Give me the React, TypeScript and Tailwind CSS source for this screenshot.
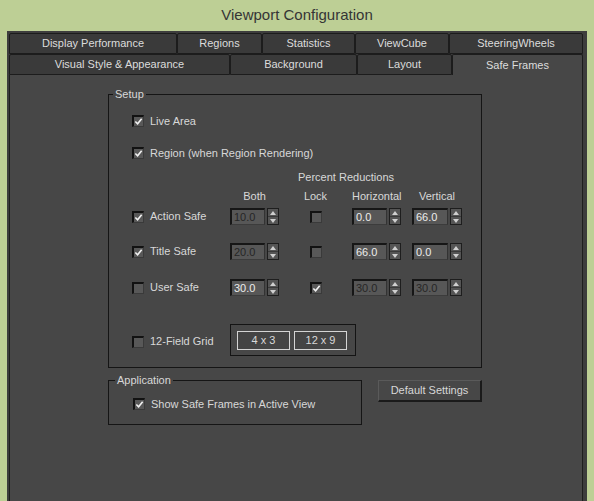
import React from "react";

const font = "font-['Liberation_Sans',Arial,sans-serif]";

function Check({ checked }: { checked?: boolean }) {
  return (
    <span className="relative inline-flex w-[12px] h-[12px] shrink-0 bg-[#585858] border-t-2 border-l-2 border-r border-b border-t-[#121212] border-l-[#121212] border-r-[#3a3a3a] border-b-[#3a3a3a]">
      {checked && (
        <svg viewBox="0 0 10 10" className="absolute left-[0px] top-[0px] w-[9px] h-[9px]">
          <path d="M1.5 5 L4 7.5 L8.5 2" fill="none" stroke="#f2f2f2" strokeWidth="1.8" />
        </svg>
      )}
    </span>
  );
}

function Spinner({ value, disabled, w = 35 }: { value: string; disabled?: boolean; w?: number }) {
  return (
    <div className="flex items-stretch gap-[2px] h-[17px]">
      <div
        className={`flex items-center pl-[2px] h-[17px] bg-[#575757] border-t-2 border-l-2 border-r border-b border-t-[#161616] border-l-[#161616] border-r-[#333] border-b-[#3c3c3c] text-[11px] leading-none ${
          disabled ? "text-[#262626]" : "text-[#ececec]"
        }`}
        style={{ width: w }}
      >
        {value}
      </div>
      <div className="w-[12px] h-[17px] flex flex-col bg-[#555] border border-[#1e1e1e]">
        <div className="flex-1 flex items-center justify-center border-b border-[#3a3a3a]">
          <svg viewBox="0 0 6 4" className="w-[6px] h-[4px]">
            <path d="M0 4 L3 0 L6 4 Z" fill="#d0d0d0" />
          </svg>
        </div>
        <div className="flex-1 flex items-center justify-center">
          <svg viewBox="0 0 6 4" className="w-[6px] h-[4px]">
            <path d="M0 0 L3 4 L6 0 Z" fill="#d0d0d0" />
          </svg>
        </div>
      </div>
    </div>
  );
}

function Tab({ label, w, selected, h }: { label: string; w: number; selected?: boolean; h: number }) {
  return (
    <div
      className={`flex items-center justify-center shrink-0 border border-[#1c1c1c] rounded-t-[2px] text-[11px] text-[#dcdcdc] ${
        selected ? "bg-[#474747] border-b-0" : "bg-[#3a3a3a]"
      }`}
      style={{ width: w, height: h }}
    >
      {label}
    </div>
  );
}

function Row({ label, checked, both, bothDis, lock, hor, horDis, ver, verDis }: any) {
  return (
    <div className="flex items-center h-[17px]">
      <div className="w-[98px] flex items-center gap-[6px]">
        <Check checked={checked} />
        <span>{label}</span>
      </div>
      <Spinner value={both} disabled={bothDis} />
      <div className="w-[73px] flex justify-center">
        <Check checked={lock} />
      </div>
      <Spinner value={hor} disabled={horDis} />
      <div className="w-[11px]" />
      <Spinner value={ver} disabled={verDis} w={36} />
    </div>
  );
}

export default function App() {
  return (
    <div className={`w-[594px] h-[501px] bg-[#bdcf95] flex flex-col overflow-hidden ${font}`}>
      <div className="h-[31px] flex items-center justify-center text-[15px] text-[#353535]">
        Viewport Configuration
      </div>
      <div className="flex-1 mx-[7px] bg-[#3d3d3d] pt-[2px] px-[2px] flex flex-col">
        <div className="flex">
          <Tab label="Display Performance" w={168} h={21} />
          <Tab label="Regions" w={85} h={21} />
          <Tab label="Statistics" w={93} h={21} />
          <Tab label="ViewCube" w={94} h={21} />
          <Tab label="SteeringWheels" w={134} h={21} />
        </div>
        <div className="flex">
          <Tab label="Visual Style & Appearance" w={221} h={21} />
          <Tab label="Background" w={127} h={21} />
          <Tab label="Layout" w={95} h={21} />
          <Tab label="Safe Frames" w={131} h={21} selected />
        </div>
        <div className="flex-1 bg-[#474747] border-x border-[#1e1e1e] w-[574px] text-[11px] text-[#d8d8d8]">
          <div className="ml-[98px] mt-[19px] w-[374px]">
            {/* Setup */}
            <div className="relative h-[274px] border border-[#151515] pl-[23px] pt-[19px]">
              <span className="absolute left-[4px] top-[-8px] bg-[#474747] px-[2px] leading-[14px]">Setup</span>
              <div className="flex items-center gap-[6px] h-[14px]">
                <Check checked />
                <span>Live Area</span>
              </div>
              <div className="flex items-center gap-[6px] h-[14px] mt-[18px]">
                <Check checked />
                <span>Region (when Region Rendering)</span>
              </div>
              <div className="h-[14px] mt-[10px] pl-[166px] leading-[14px]">Percent Reductions</div>
              <div className="flex h-[14px] mt-[5px] leading-[14px]">
                <div className="w-[98px]" />
                <div className="w-[49px] text-center">Both</div>
                <div className="w-[73px] text-center">Lock</div>
                <div className="w-[49px] text-center">Horizontal</div>
                <div className="w-[11px]" />
                <div className="w-[50px] text-center">Vertical</div>
              </div>
              <div className="mt-[5px]">
                <Row label="Action Safe" checked both="10.0" bothDis hor="0.0" ver="66.0" />
              </div>
              <div className="mt-[18px]">
                <Row label="Title Safe" checked both="20.0" bothDis hor="66.0" ver="0.0" />
              </div>
              <div className="mt-[19px]">
                <Row label="User Safe" both="30.0" lock hor="30.0" horDis ver="30.0" verDis />
              </div>
              <div className="flex items-center mt-[28px]">
                <div className="w-[98px] flex items-center gap-[6px] pt-[3px]">
                  <Check />
                  <span>12-Field Grid</span>
                </div>
                <div className="w-[126px] h-[32px] border border-[#141414] flex items-center pl-[6px] gap-[4px]">
                  <div className="w-[53px] h-[19px] border border-[#d4d4d4] bg-[#444] flex items-center justify-center">4 x 3</div>
                  <div className="w-[53px] h-[19px] border border-[#d4d4d4] bg-[#444] flex items-center justify-center">12 x 9</div>
                </div>
              </div>
            </div>
            {/* Application */}
            <div className="flex mt-[12px] items-start">
              <div className="relative w-[254px] h-[45px] border border-[#151515] pl-[24px] pt-[16px]">
                <span className="absolute left-[6px] top-[-8px] bg-[#474747] px-[2px] leading-[14px]">Application</span>
                <div className="flex items-center gap-[6px] h-[14px]">
                  <Check checked />
                  <span>Show Safe Frames in Active View</span>
                </div>
              </div>
              <div className="ml-[16px] w-[104px] h-[22px] flex items-center justify-center bg-[#474747] border-t border-l border-r-2 border-b-2 border-t-[#5a5a5a] border-l-[#5a5a5a] border-r-[#1a1a1a] border-b-[#1a1a1a]">
                Default Settings
              </div>
            </div>
          </div>
        </div>
      </div>
    </div>
  );
}
